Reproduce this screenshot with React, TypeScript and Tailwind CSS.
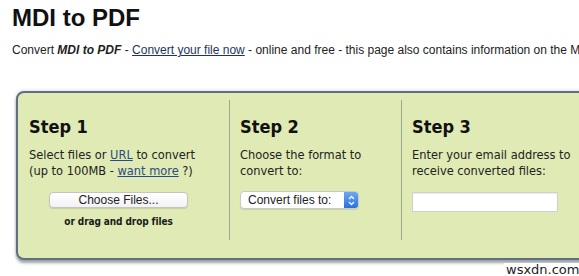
import React from "react";

const tah = "font-['DejaVu_Sans_Condensed','DejaVu_Sans',sans-serif] [font-stretch:condensed]";

export default function App() {
  return (
    <div className="relative h-[276px] w-[579px] overflow-hidden bg-white text-[#111]">
      <div className="pl-[12px] pt-[4px] font-['Liberation_Sans',Arial,sans-serif]">
        <h1 className="text-[24px] font-bold leading-[28px] text-[#111]">MDI to PDF</h1>
        <p className="mt-[10px] whitespace-nowrap text-[12px] leading-[16px] text-[#222]">
          Convert <b className="italic">MDI to PDF</b> -{" "}
          <a className="text-[#1d3461] underline">Convert your file now</a> - online and free - this page also
          contains information on the MDI to PDF conversion
        </p>
      </div>

      <div
        className={`ml-[16px] mt-[33px] w-[640px] rounded-[8px] border-2 border-[#5e7080] bg-[#dfeab5] pb-[18px] shadow-[0_3px_3px_rgba(40,50,60,0.45),0_-1px_3px_rgba(120,130,220,0.25)] ${tah}`}
      >
        <div className="mt-[7px] flex">
          <div className="h-[140px] w-[211px] pl-[11px] pr-[21px] pt-[16px]">
            <h2 className="text-[18px] font-bold leading-[22px] text-[#111]">Step 1</h2>
            <p className="mt-[9px] text-[12.7px] leading-[16px] text-[#222]">
              Select files or <a className="text-[#2b4a86] underline">URL</a> to convert
              <br />
              (up to 100MB - <a className="text-[#2b4a86] underline">want more</a> ?)
            </p>
            <div className="mt-[13px] flex justify-center">
              <button className="flex h-[16px] w-[139px] items-center justify-center rounded-[4px] border border-[#c4c4c4] bg-gradient-to-b from-white to-[#f2f2f2] font-['Liberation_Sans',Arial,sans-serif] text-[12px] leading-none text-[#222] shadow-[0_1px_1px_rgba(0,0,0,0.12)]">
                Choose Files...
              </button>
            </div>
            <p className="mt-[7px] text-center text-[10px] font-bold leading-[14px] tracking-[-0.1px] text-[#1a1a1a]">
              or drag and drop files
            </p>
          </div>

          <div className="h-[140px] w-[172px] border-l border-[#9ea68e] pl-[10px] pt-[16px]">
            <h2 className="text-[18px] font-bold leading-[22px] text-[#111]">Step 2</h2>
            <p className="mt-[9px] text-[12.7px] leading-[16px] text-[#222]">
              Choose the format to
              <br />
              convert to:
            </p>
            <div className="mt-[12px] flex h-[18px] w-[119px] items-stretch overflow-hidden rounded-[4px] border border-[#c9c9c9] bg-white shadow-[0_1px_1px_rgba(0,0,0,0.1)]">
              <span className="flex flex-1 items-center pl-[7px] font-['Liberation_Sans',Arial,sans-serif] text-[12px] leading-none text-[#222]">
                Convert files to:
              </span>
              <span className="flex w-[14px] items-center justify-center bg-gradient-to-b from-[#6aa8f5] to-[#2b6fdc]">
                <svg width="7" height="11" viewBox="0 0 7 11" fill="none" stroke="white" strokeWidth="1.3">
                  <path d="M1 4 L3.5 1.5 L6 4" />
                  <path d="M1 7 L3.5 9.5 L6 7" />
                </svg>
              </span>
            </div>
          </div>

          <div className="h-[140px] flex-1 border-l border-[#9ea68e] pl-[10px] pt-[16px]">
            <h2 className="text-[18px] font-bold leading-[22px] text-[#111]">Step 3</h2>
            <p className="mt-[9px] text-[12.7px] leading-[16px] text-[#222]">
              Enter your email address to
              <br />
              receive converted files:
            </p>
            <div className="mt-[13px] h-[20px] w-[146px] border border-[#cfcfcf] bg-white shadow-[inset_0_1px_1px_rgba(0,0,0,0.08)]" />
          </div>
        </div>
      </div>

      <div className="absolute bottom-0 left-[504px] bg-white px-[2px] font-['DejaVu_Sans',sans-serif] text-[13px] leading-[13px] text-[#222]">
        wsxdn.com
      </div>
    </div>
  );
}
